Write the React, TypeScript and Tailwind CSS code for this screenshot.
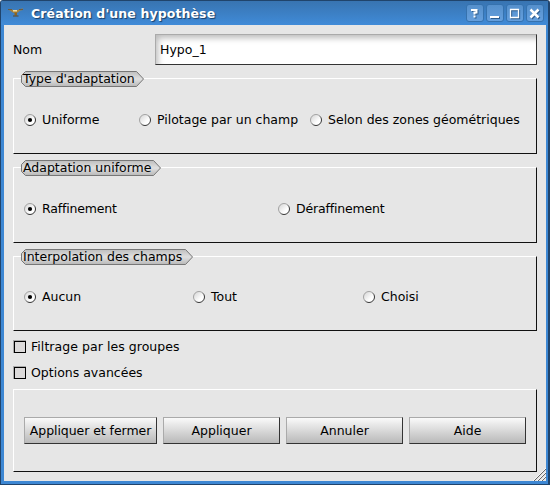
import type { ReactNode } from 'react';

function TitleIcon() {
  return (
    <svg width="15" height="10" viewBox="0 0 15 10" className="mr-[8px] shrink-0">
      <path d="M0 1.500l3-.5 2 1h5l2-1 3-.5v1.500l-3 .5-2 2-2 .5H6L4 4 2 2.500z" fill="#a8823a" />
      <path d="M5 2h4v1.500H5z" fill="#f0dfa4" />
      <path d="M0 1h4v1H0zM11 1h4v1h-4z" fill="#6d5c40" />
      <path d="M6.500 4.500h2.500v3H6.500z" fill="#8c6420" />
      <path d="M5 7.500h5.500v1H5z" fill="#604620" />
    </svg>
  );
}

function WindowButton({ children }: { children: ReactNode }) {
  return (
    <button className="h-[18px] w-[18px] rounded-[3px] border border-[#3672ae] bg-linear-to-b from-[#5590cc] to-[#659fdd]">
      <svg width="16" height="16" viewBox="0 0 16 16" fill="none" strokeWidth="2">
        <g stroke="#2d5c8d" transform="translate(1 1)">{children}</g>
        <g stroke="#ffffff">{children}</g>
      </svg>
    </button>
  );
}

function Radio({ label, checked = false, className = '' }: { label: string; checked?: boolean; className?: string }) {
  return (
    <label className={`flex items-center whitespace-nowrap ${className}`}>
      <svg width="12" height="12" viewBox="0 0 12 12" className="mr-[6px] mb-[2px] shrink-0">
        <defs>
          <linearGradient id="radioFill" x1="0" y1="0" x2="1" y2="1">
            <stop offset="0.15" stopColor="#dcdcdc" />
            <stop offset="0.65" stopColor="#ffffff" />
          </linearGradient>
          <linearGradient id="radioEdge" x1="0" y1="0" x2="1" y2="1">
            <stop offset="0.4" stopColor="#a2a2a2" />
            <stop offset="0.65" stopColor="#333333" />
          </linearGradient>
        </defs>
        <circle cx="6" cy="6" r="5.5" fill="url(#radioFill)" stroke="url(#radioEdge)" />
        {checked && <circle cx="6" cy="6" r="2.1" fill="#000" />}
      </svg>
      <span>{label}</span>
    </label>
  );
}

function Group({ title, width, className, children }: { title: string; width: number; className: string; children: ReactNode }) {
  const e = width - 0.5;
  return (
    <section className={`relative flex border-t border-r border-b border-l border-t-white border-r-[#111] border-b-[#111] border-l-white pl-[10px] ${className}`}>
      <div className="absolute top-[-8px] left-[7px] h-[17px] bg-[#e6e6e6]">
        <svg width={width} height="17" className="block">
          <defs>
            <linearGradient id="tabFill" x1="0" y1="0" x2="0" y2="1">
              <stop offset="0" stopColor="#bebebe" />
              <stop offset="0.5" stopColor="#e0e0e0" />
              <stop offset="1" stopColor="#b8b8b8" />
            </linearGradient>
          </defs>
          <path d={`M4.5 .5H${e - 7}L${e} 8L${e - 7} 15.5H4.5L.5 11.5V4.5Z`} fill="url(#tabFill)" stroke="#777" />
        </svg>
        <h2 className="absolute top-0 left-[2px] leading-[16px] whitespace-nowrap">{title}</h2>
      </div>
      {children}
    </section>
  );
}

function Check({ label, className }: { label: string; className: string }) {
  return (
    <label className={`flex h-[13px] items-center ${className}`}>
      <span className="mr-[5px] h-[13px] w-[13px] border-t border-l border-[#aaa]">
        <span className="block h-[12px] w-[12px] border border-black bg-[#dcdada]" />
      </span>
      <span className="pt-[2px]">{label}</span>
    </label>
  );
}

function PushButton({ children, className = 'w-[117px]' }: { children: ReactNode; className?: string }) {
  return (
    <button className={`h-[27px] border border-t-[#aaa] border-r-[#333] border-b-[#333] border-l-[#aaa] bg-linear-to-b from-[#fafafa] to-[#b9b9b9] pt-[2px] whitespace-nowrap ${className}`}>
      {children}
    </button>
  );
}

export default function App() {
  return (
    <main className="relative flex h-[485px] w-[550px] flex-col overflow-hidden rounded-t-[3px] border-t border-r-2 border-b border-l border-[#20446c] bg-[#3d87d3] font-['DejaVu_Sans',sans-serif] text-[12.5px] text-black">
      <header className="flex h-[24px] shrink-0 items-center bg-linear-to-b from-[#3874b1] to-[#408bd8] pr-[4px] pl-[7px]">
        <TitleIcon />
        <h1 className="flex-1 pt-[2px] text-[12.5px] font-bold tracking-[0.11px] text-white [text-shadow:1px_1px_1px_#173d66]">Création d'une hypothèse</h1>
        <div className="flex gap-[2px]">
          <WindowButton><path d="M4 5h5.500v2.500H7.500v2M6.500 11.500h2" /></WindowButton>
          <WindowButton><path d="M3 12h9" /></WindowButton>
          <WindowButton><path d="M3 4.500h9M3.500 4v8.500h8V4" strokeWidth="1.300" /></WindowButton>
          <WindowButton><path d="M3.500 4.500l8 8M11.500 4.500l-8 8" strokeWidth="2.500" /></WindowButton>
        </div>
      </header>
      <div className="mr-[2px] ml-[3px] flex h-[456px] flex-col bg-[#e6e6e6] px-[9px] pt-[9px]">
        <div className="flex h-[31px] shrink-0 items-center">
          <label className="w-[142px] pt-[2px]">Nom</label>
          <div className="flex h-[31px] flex-1 items-center border border-t-[#aaa] border-r-[#333] border-b-[#333] border-l-[#aaa] bg-white pt-[2px] pl-[4px] shadow-[inset_4px_5px_6px_-2px_#bbb]">Hypo_1</div>
        </div>
        <Group title="Type d'adaptation" width={123} className="mt-[13px] h-[76px] pt-[9px]">
          <Radio label="Uniforme" checked className="w-[115px]" />
          <Radio label="Pilotage par un champ" className="w-[171px]" />
          <Radio label="Selon des zones géométriques" />
        </Group>
        <Group title="Adaptation uniforme" width={140} className="mt-[13px] h-[76px] pt-[9px]">
          <Radio label="Raffinement" checked className="w-[254px] tracking-[-0.18px]" />
          <Radio label="Déraffinement" className="tracking-[-0.16px]" />
        </Group>
        <Group title="Interpolation des champs" width={172} className="mt-[13px] h-[75px] pt-[8px]">
          <Radio label="Aucun" checked className="w-[169px]" />
          <Radio label="Tout" className="w-[170px]" />
          <Radio label="Choisi" />
        </Group>
        <Check label="Filtrage par les groupes" className="mt-[9px] tracking-[0.05px]" />
        <Check label="Options avancées" className="mt-[13px]" />
        <section className="mt-[10px] flex h-[83px] items-center gap-[6px] border border-t-white border-r-[#111] border-b-[#111] border-l-white pl-[10px]">
          <PushButton className="w-[133px] tracking-[-0.06px]">Appliquer et fermer</PushButton>
          <PushButton>Appliquer</PushButton>
          <PushButton>Annuler</PushButton>
          <PushButton>Aide</PushButton>
        </section>
      </div>
      <svg width="13" height="13" viewBox="0 0 13 13" className="absolute right-[2px] bottom-[3px]">
        <path d="M1 13L13 1M5 13l8-8M9 13l4-4" stroke="#666" />
        <path d="M0 13L13 0M4 13l9-9M8 13l5-5" stroke="#fff" strokeWidth=".7" />
      </svg>
    </main>
  );
}
